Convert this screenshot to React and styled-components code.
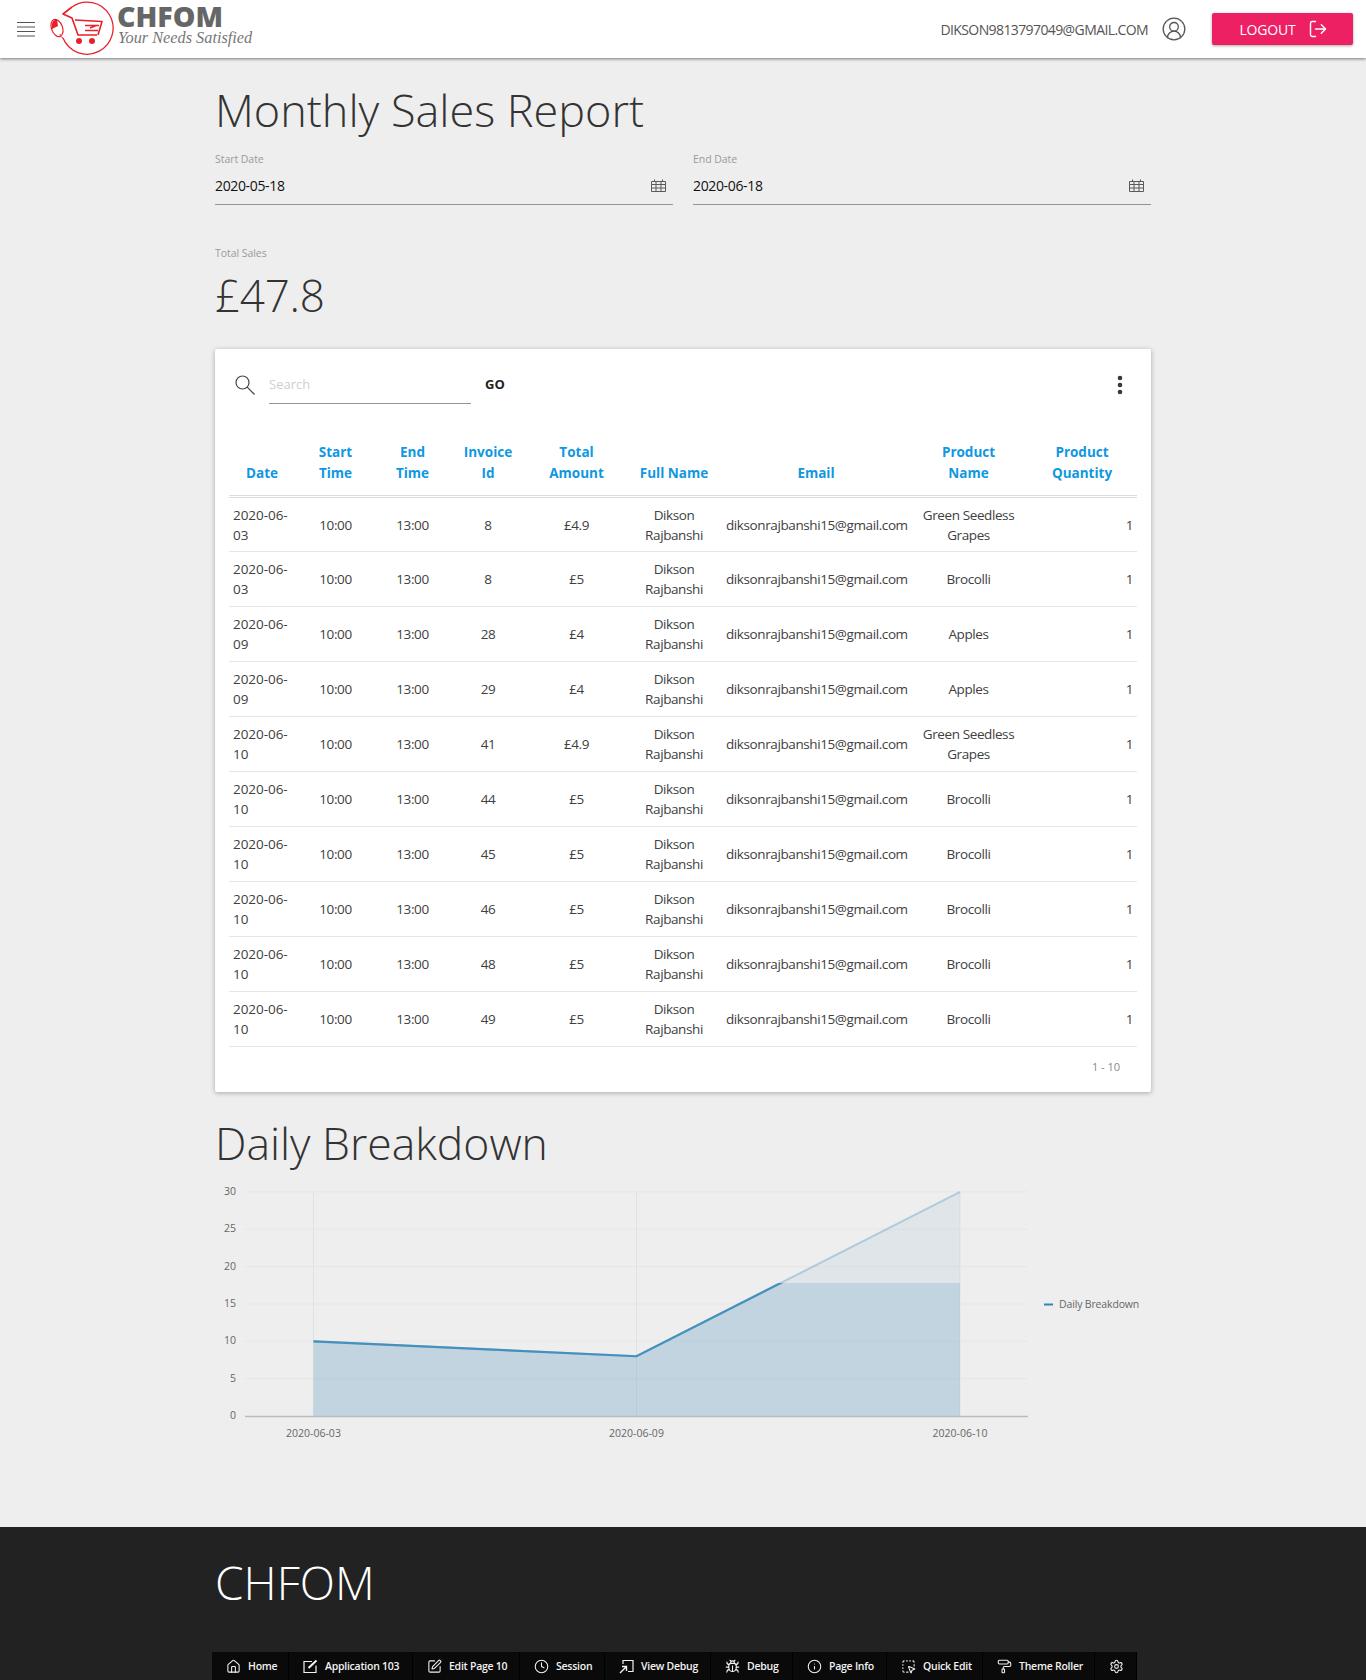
import React from "react"
import styled, { createGlobalStyle } from "styled-components"
import {
  CircleUserRound,
  LogOut,
  EllipsisVertical,
  Home,
  SquarePen,
  Clock,
  Bug,
  Info,
  SquareDashedMousePointer,
  PaintRoller,
  Settings,
} from "lucide-react"

const FONT = `"Open Sans", "Noto Sans", sans-serif`

const GlobalStyle = createGlobalStyle`
  html, body {
    margin: 0;
    padding: 0;
    background: #eeeeee;
    font-family: ${FONT};
    color: #404040;
  }
  * { box-sizing: border-box; }
`

const sales = [
  ["2020-06-03", "8", "£4.9", "Green Seedless Grapes"],
  ["2020-06-03", "8", "£5", "Brocolli"],
  ["2020-06-09", "28", "£4", "Apples"],
  ["2020-06-09", "29", "£4", "Apples"],
  ["2020-06-10", "41", "£4.9", "Green Seedless Grapes"],
  ["2020-06-10", "44", "£5", "Brocolli"],
  ["2020-06-10", "45", "£5", "Brocolli"],
  ["2020-06-10", "46", "£5", "Brocolli"],
  ["2020-06-10", "48", "£5", "Brocolli"],
  ["2020-06-10", "49", "£5", "Brocolli"],
]

const columns = [
  { label: "Date", width: 66 },
  { label: "Start Time", width: 81, broken: true },
  { label: "End Time", width: 73, broken: true },
  { label: "Invoice Id", width: 78, broken: true },
  { label: "Total Amount", width: 99, broken: true },
  { label: "Full Name", width: 96 },
  { label: "Email", width: 188 },
  { label: "Product Name", width: 117, broken: true },
  { label: "Product Quantity", width: 110, broken: true },
]

const ApplicationIcon = () => (
  <svg width="15" height="15" viewBox="0 0 15 15" fill="none" stroke="currentColor">
    <path d="M9 2.5H1V13.5H13V6.5" strokeWidth="1.2" />
    <path d="M5.5 9L13.5 1.5" strokeWidth="2" />
  </svg>
)

const ViewDebugIcon = () => (
  <svg width="15" height="15" viewBox="0 0 15 15" fill="none" stroke="currentColor">
    <path d="M4 5V1.5H14V12.5H9" strokeWidth="1.2" />
    <path d="M1 14L7 8M3 7.5H7.5V12" strokeWidth="1.4" />
  </svg>
)

const devItems = [
  { label: "Home", icon: <Home size={15} strokeWidth={1.7} />, width: 77 },
  { label: "Application 103", icon: <ApplicationIcon />, width: 124 },
  { label: "Edit Page 10", icon: <SquarePen size={15} strokeWidth={1.7} />, width: 107 },
  { label: "Session", icon: <Clock size={15} strokeWidth={1.7} />, width: 85 },
  { label: "View Debug", icon: <ViewDebugIcon />, width: 106 },
  { label: "Debug", icon: <Bug size={15} strokeWidth={1.7} />, width: 82 },
  { label: "Page Info", icon: <Info size={15} strokeWidth={1.7} />, width: 94 },
  { label: "Quick Edit", icon: <SquareDashedMousePointer size={15} strokeWidth={1.7} />, width: 96 },
  { label: "Theme Roller", icon: <PaintRoller size={15} strokeWidth={1.7} />, width: 112 },
  { icon: <Settings size={15} strokeWidth={1.7} />, width: 42 },
]

const Header = styled.header`
  height: 58px;
  background: #fff;
  display: flex;
  align-items: center;
  padding: 0 13px 0 17px;
  box-shadow: 0 1px 3px rgba(0, 0, 0, 0.5);
  position: relative;
`

const Burger = styled.svg`
  flex: none;
`

const Brand = styled.div`
  display: flex;
  align-items: flex-start;
  margin-left: 15px;
  height: 58px;
`

const BrandText = styled.div`
  margin-left: 1px;
  padding-top: 3px;
`

const BrandName = styled.div`
  font-size: 28.5px;
  line-height: 26px;
  font-weight: 800;
  color: #666;
`

const Tagline = styled.div`
  font-family: "Liberation Serif", serif;
  font-style: italic;
  font-size: 16.3px;
  line-height: 18px;
  color: #777;
  padding-left: 1px;
`

const HeaderRight = styled.div`
  margin-left: auto;
  display: flex;
  align-items: center;
`

const UserEmail = styled.span`
  font-size: 14px;
  color: #555;
  letter-spacing: -0.6px;
`

const UserIcon = styled(CircleUserRound)`
  color: #555;
  margin: 0 25px 0 13px;
`

const LogoutButton = styled.button`
  width: 141px;
  height: 32px;
  border: 0;
  padding: 0 0 0 3px;
  border-radius: 2px;
  background: #ed2064;
  color: #fff;
  font-family: ${FONT};
  font-size: 14px;
  letter-spacing: -0.2px;
  display: flex;
  align-items: center;
  justify-content: center;
  gap: 13px;
  box-shadow: 0 1px 3px rgba(0, 0, 0, 0.35);
`

const Main = styled.main`
  width: 936px;
  margin: 0 auto 0 215px;
`

const PageTitle = styled.h1`
  margin: 0;
  padding-top: 20px;
  font-size: 45px;
  line-height: 64px;
  font-weight: 300;
  color: #333;
`

const DateRow = styled.div`
  display: grid;
  grid-template-columns: 458px 458px;
  column-gap: 20px;
  margin-top: 10px;
`

const SmallLabel = styled.div`
  font-size: 10.5px;
  line-height: 14px;
  letter-spacing: -0.05px;
  color: #9a9a9a;
`

const DateField = styled.div`
  margin-top: 7px;
  height: 32px;
  display: flex;
  align-items: center;
  justify-content: space-between;
  padding: 0 7px 7px 0;
  border-bottom: 1px solid #949494;
  font-size: 14px;
  letter-spacing: -0.35px;
  color: #111;
`

const TotalBlock = styled.div`
  margin-top: 41px;
`

const TotalValue = styled.div`
  font-size: 44px;
  line-height: 62px;
  font-weight: 300;
  letter-spacing: -0.3px;
  color: #333;
  margin-top: 4px;
`

const Card = styled.section`
  margin-top: 23px;
  height: 743px;
  background: #fff;
  border-radius: 2px;
  box-shadow: 0 1px 5px rgba(0, 0, 0, 0.3);
  padding: 0 14px;
`

const SearchBar = styled.div`
  height: 93px;
  display: flex;
  align-items: flex-start;
  padding: 24px 0 0 6px;
`

const SearchGlyph = styled.svg`
  flex: none;
  margin-top: 2px;
`

const SearchInput = styled.div`
  width: 202px;
  height: 31px;
  margin-left: 14px;
  border-bottom: 1px solid #949494;
  font-size: 13px;
  line-height: 22px;
  color: #cfcfcf;
`

const GoLabel = styled.span`
  margin-left: 14px;
  font-size: 13px;
  line-height: 22px;
  font-weight: 700;
  color: #222;
`

const MoreIcon = styled(EllipsisVertical)`
  margin-left: auto;
  margin-right: 5px;
  color: #333;
`

const Table = styled.table`
  width: 908px;
  border-collapse: collapse;
  table-layout: fixed;
  font-size: 13.5px;
  line-height: 20px;
`

const Th = styled.th`
  width: ${(props) => props.$width}px;
  height: 49px;
  padding: 0 4px 11px;
  vertical-align: bottom;
  text-align: center;
  font-size: 13.5px;
  line-height: 21px;
  font-weight: 700;
  color: #0f97e2;
  border-bottom: 3px double #dcdcdc;
  word-spacing: ${(props) => (props.$broken ? "200px" : "normal")};
`

const Row = styled.tr`
  height: 55px;
  border-bottom: 1px solid #e6e6e6;
`

const Cell = styled.td`
  padding: 0 4px;
  text-align: center;
  letter-spacing: -0.4px;
`

const DateCell = styled(Cell)`
  text-align: left;
  letter-spacing: -0.05px;
`

const QtyCell = styled(Cell)`
  text-align: right;
`

const Pagination = styled.div`
  text-align: right;
  padding: 12px 17px 0 0;
  font-size: 11px;
  line-height: 16px;
  color: #888;
`

const SubTitle = styled.h2`
  margin: 25px 0 0;
  font-size: 44.5px;
  line-height: 52px;
  font-weight: 300;
  color: #333;
`

const Chart = styled.svg`
  display: block;
  margin-top: 1px;
`

const AxisText = styled.text`
  font-family: ${FONT};
  font-size: 10.5px;
  fill: #666;
`

const Footer = styled.footer`
  margin-top: 67px;
  height: 153px;
  background: #222;
  padding: 23px 0 0 212px;
  display: flex;
  flex-direction: column;
  justify-content: space-between;
`

const FooterTitle = styled.div`
  padding-left: 3px;
  font-size: 46px;
  line-height: 64px;
  font-weight: 300;
  color: #fff;
`

const DevBar = styled.nav`
  width: 925px;
  height: 28px;
  background: #0a0a0a;
  display: flex;
`

const DevItem = styled.div`
  width: ${(props) => props.$width}px;
  display: flex;
  align-items: center;
  gap: 7px;
  padding-left: 14px;
  font-size: 10.5px;
  font-weight: 600;
  letter-spacing: -0.25px;
  color: #f2f2f2;
  border-right: 1px solid #000;
  white-space: nowrap;
`

const BurgerIcon = () => (
  <Burger width="18" height="16" viewBox="0 0 18 16">
    <path d="M0 1.5H18M0 6H18M0 10.5H18M0 15H18" stroke="#555" strokeWidth="1" />
  </Burger>
)

const CalendarGrid = () => (
  <svg width="15" height="13" viewBox="0 0 15 13" fill="none" stroke="#5a5a5a" strokeWidth="1">
    <path d="M0.5 2.5H14.5V12.5H0.5Z" />
    <path d="M0.5 5.5H14.5M0.5 9H14.5M5 2.5V12.5M10 2.5V12.5M3.5 0.5V2.5M11.5 0.5V2.5" />
  </svg>
)

const Logo = () => (
  <svg width="66" height="58" viewBox="0 0 66 58" fill="none">
    <path d="M22 7 A26 26 0 1 1 13 38" stroke="#e8202a" strokeWidth="1.3" />
    <path d="M22 7 L13 14 L22 18 L28 35 L47 35" stroke="#e8202a" strokeWidth="1.6" strokeLinejoin="round" />
    <path d="M25 20 L52 21.5 L48 35" stroke="#e8202a" strokeWidth="1.6" strokeLinejoin="round" />
    <path d="M35 25.5 H49 M35 30.5 H48 M46 25.5 L40 28" stroke="#e8202a" strokeWidth="1.5" />
    <circle cx="29" cy="41" r="3" fill="#e8202a" />
    <circle cx="42" cy="41" r="3" fill="#e8202a" />
    <ellipse cx="7" cy="28" rx="5.5" ry="9" transform="rotate(-20 7 28)" fill="#fff" stroke="#e8202a" strokeWidth="1.2" />
    <path d="M7 19 C2.5 20 1 24 2 29 L8 26 Z" fill="#e8202a" />
    <path d="M10 34 C10 36 11 37 13 38" stroke="#e8202a" strokeWidth="1" />
  </svg>
)

// plot geometry in svg coords, chart starts at x 215, y 1170 of the page
const X = [98.5, 421.5, 745]
const yFor = (value) => 246 - value * 7.47

const SalesChart = () => {
  const ticks = [0, 5, 10, 15, 20, 25, 30]
  const line = `M${X[0]} ${yFor(10)} L${X[1]} ${yFor(8)} L${X[2]} ${yFor(30)}`
  const area = `${line} L${X[2]} 246 L${X[0]} 246 Z`
  const cut = 113
  return (
    <Chart width="936" height="290" viewBox="0 0 936 290">
      <defs>
        <clipPath id="reveal">
          <rect x="0" y={cut} width="936" height={246 - cut} />
        </clipPath>
      </defs>
      {ticks.map((tick) => (
        <g key={tick}>
          {tick > 0 && <line x1="30" x2="813" y1={yFor(tick)} y2={yFor(tick)} stroke="#e6e6e6" />}
          <AxisText x="21" y={yFor(tick) + 3} textAnchor="end">{tick}</AxisText>
        </g>
      ))}
      {X.map((x) => (
        <line key={x} x1={x} x2={x} y1={yFor(30)} y2="246" stroke="#dde2e7" />
      ))}
      <path d={area} fill="#6f9fc4" opacity="0.1" />
      <path d={area} fill="#2f84b8" opacity="0.17" clipPath="url(#reveal)" />
      <path d={line} stroke="#2f86bb" strokeOpacity="0.3" strokeWidth="2" fill="none" />
      <path d={line} stroke="#4690be" strokeWidth="2.2" fill="none" clipPath="url(#reveal)" />
      <line x1="30" x2="813" y1="246.5" y2="246.5" stroke="#b8bcbf" strokeWidth="1.5" />
      {["2020-06-03", "2020-06-09", "2020-06-10"].map((label, idx) => (
        <AxisText key={label} x={X[idx]} y="267" textAnchor="middle">{label}</AxisText>
      ))}
      <line x1="829" x2="838" y1="134.5" y2="134.5" stroke="#2f86bb" strokeWidth="2" />
      <AxisText x="844" y="138" letterSpacing="-0.15">Daily Breakdown</AxisText>
    </Chart>
  )
}

const App = () => (
  <>
    <GlobalStyle />
    <Header>
      <BurgerIcon />
      <Brand>
        <Logo />
        <BrandText>
          <BrandName>CHFOM</BrandName>
          <Tagline>Your Needs Satisfied</Tagline>
        </BrandText>
      </Brand>
      <HeaderRight>
        <UserEmail>DIKSON9813797049@GMAIL.COM</UserEmail>
        <UserIcon size={26} strokeWidth={1.2} />
        <LogoutButton>
          LOGOUT
          <LogOut size={20} strokeWidth={1.7} />
        </LogoutButton>
      </HeaderRight>
    </Header>
    <Main>
      <PageTitle>Monthly Sales Report</PageTitle>
      <DateRow>
        <div>
          <SmallLabel>Start Date</SmallLabel>
          <DateField>
            2020-05-18
            <CalendarGrid />
          </DateField>
        </div>
        <div>
          <SmallLabel>End Date</SmallLabel>
          <DateField>
            2020-06-18
            <CalendarGrid />
          </DateField>
        </div>
      </DateRow>
      <TotalBlock>
        <SmallLabel>Total Sales</SmallLabel>
        <TotalValue>£47.8</TotalValue>
      </TotalBlock>
      <Card>
        <SearchBar>
          <SearchGlyph width="20" height="20" viewBox="0 0 20 20" fill="none" stroke="#444" strokeWidth="1.2">
            <circle cx="7.5" cy="7.5" r="6.5" />
            <path d="M12.2 12.2L19.5 19.5" />
          </SearchGlyph>
          <SearchInput>Search</SearchInput>
          <GoLabel>GO</GoLabel>
          <MoreIcon size={24} strokeWidth={2.6} />
        </SearchBar>
        <Table>
          <thead>
            <tr>
              {columns.map((col) => (
                <Th key={col.label} $width={col.width} $broken={col.broken}>{col.label}</Th>
              ))}
            </tr>
          </thead>
          <tbody>
            {sales.map((sale, idx) => (
              <Row key={idx}>
                <DateCell>{sale[0]}</DateCell>
                <Cell>10:00</Cell>
                <Cell>13:00</Cell>
                <Cell>{sale[1]}</Cell>
                <Cell>{sale[2]}</Cell>
                <Cell>Dikson Rajbanshi</Cell>
                <Cell>diksonrajbanshi15@gmail.com</Cell>
                <Cell>{sale[3]}</Cell>
                <QtyCell>1</QtyCell>
              </Row>
            ))}
          </tbody>
        </Table>
        <Pagination>1 - 10</Pagination>
      </Card>
      <SubTitle>Daily Breakdown</SubTitle>
      <SalesChart />
    </Main>
    <Footer>
      <FooterTitle>CHFOM</FooterTitle>
      <DevBar>
        {devItems.map((item, idx) => (
          <DevItem key={idx} $width={item.width}>
            {item.icon}
            {item.label}
          </DevItem>
        ))}
      </DevBar>
    </Footer>
  </>
)

export default App
